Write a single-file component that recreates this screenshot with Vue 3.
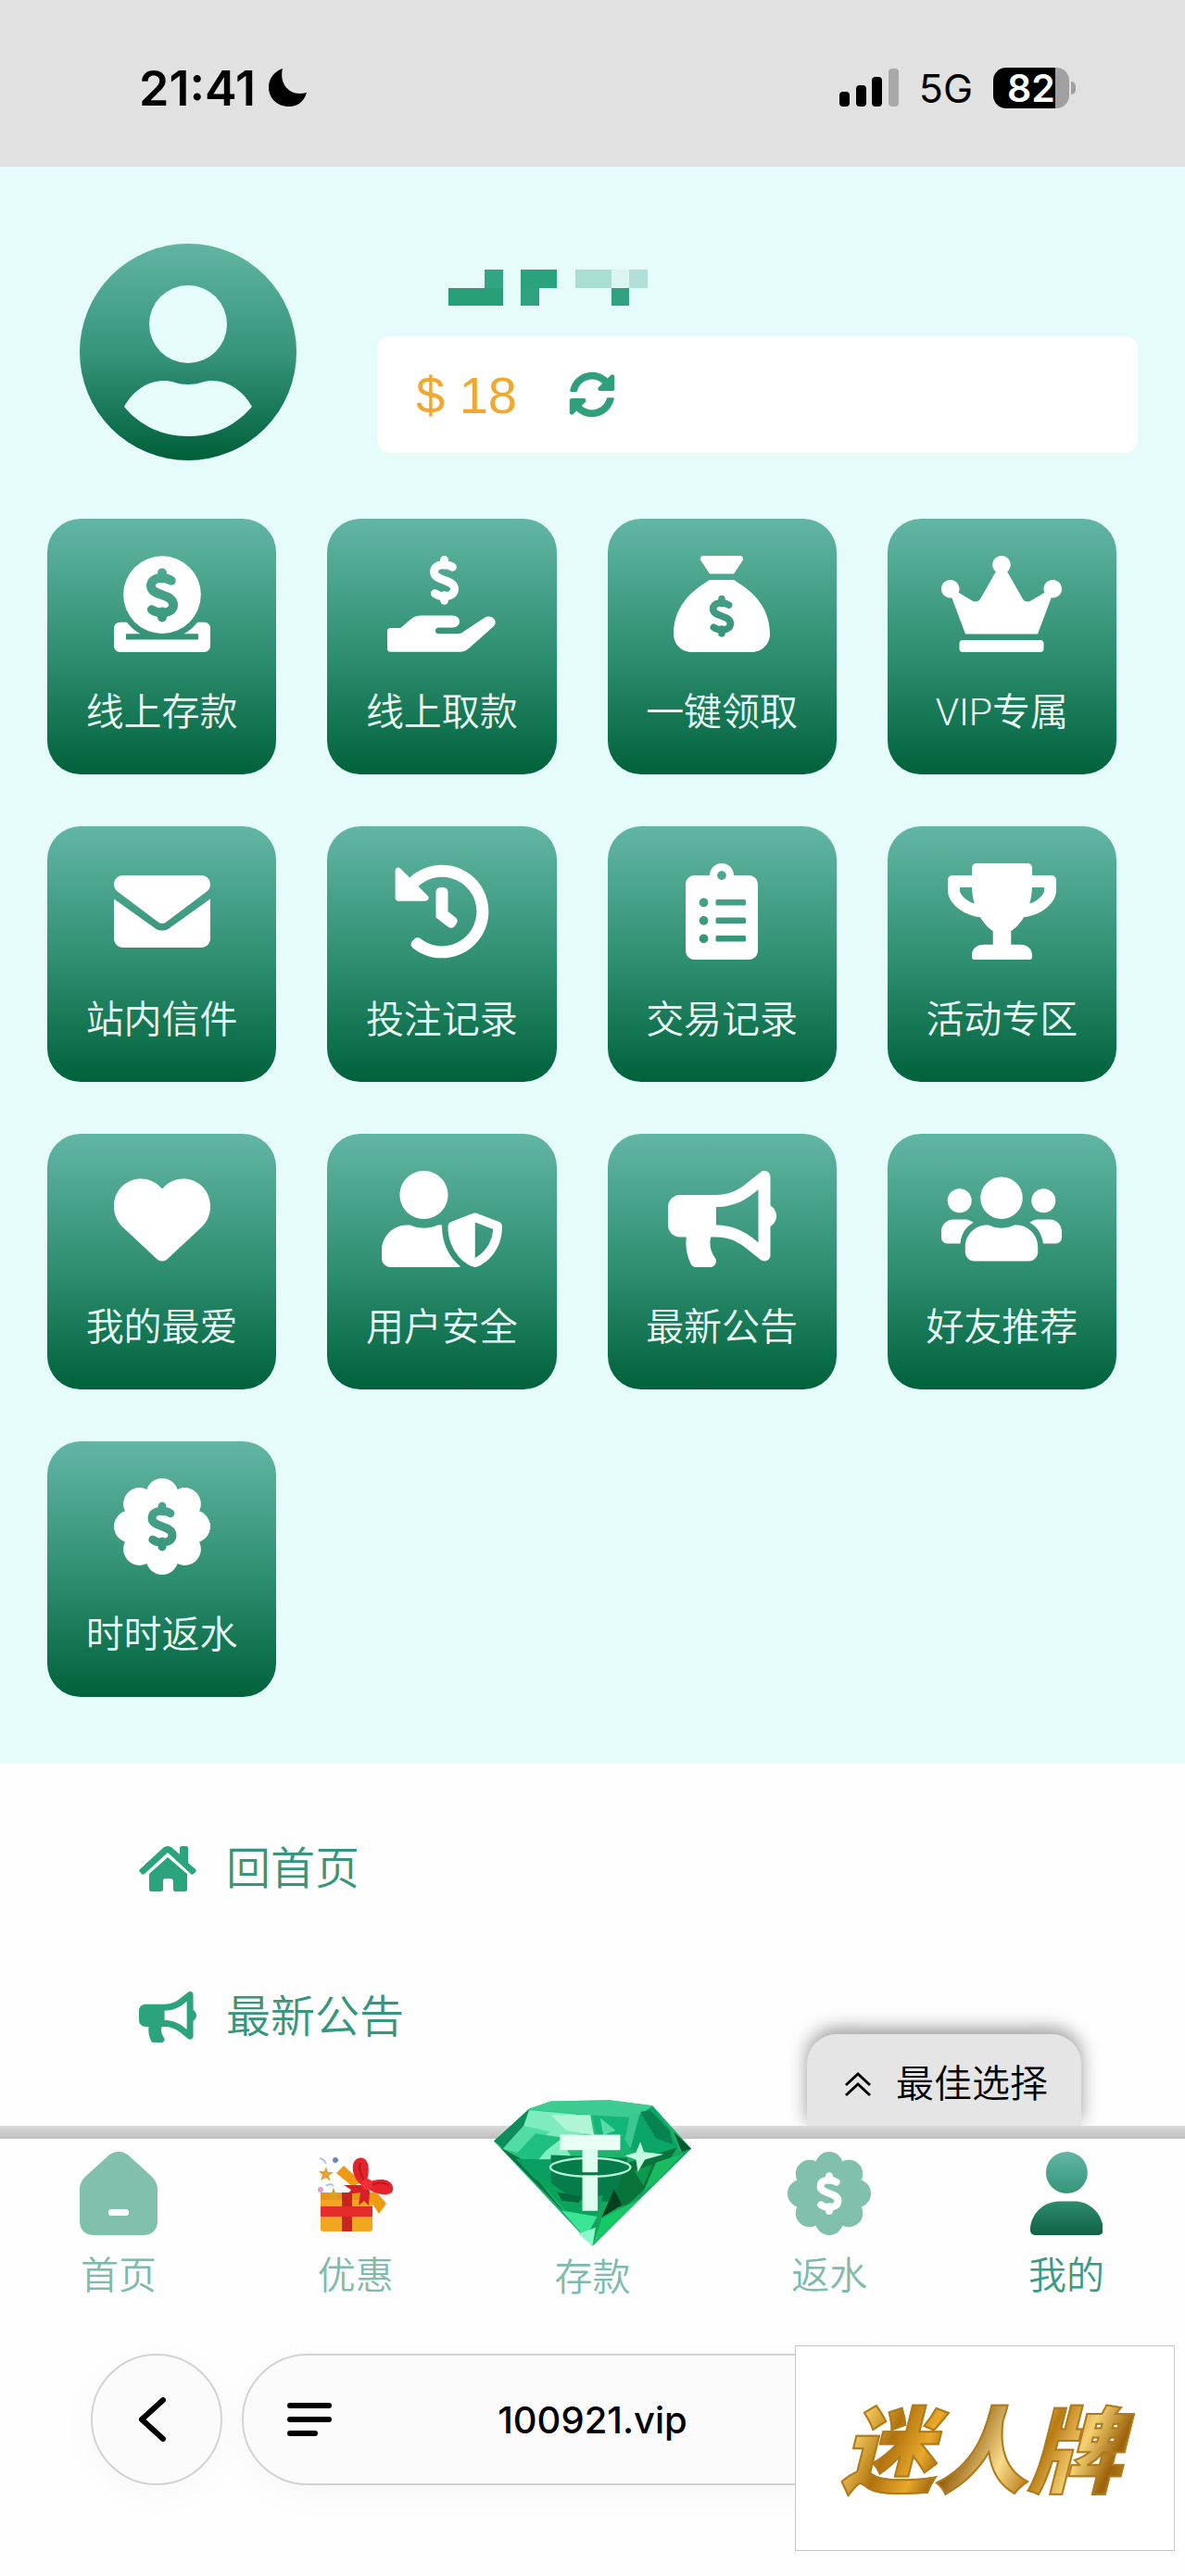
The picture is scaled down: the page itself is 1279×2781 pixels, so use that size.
<template>
    <div class="page">
        <header class="status-bar">
            <div class="status-left">
                <span class="clock">21:41</span>
                <svg class="moon" viewBox="0 0 42 42" aria-hidden="true">
                    <path d="M15 0C11 16 22 31 41 26C38 36 31 41 22 41C9 41 0 32 0 20C0 11 6 3 15 0z" />
                </svg>
            </div>
            <div class="status-right">
                <svg class="signal" viewBox="0 0 64 42" aria-hidden="true">
                    <rect x="0" y="25" width="11" height="16" rx="4" />
                    <rect x="18" y="18" width="11" height="23" rx="4" />
                    <rect x="35" y="9" width="11" height="32" rx="4" />
                    <rect x="53" y="0" width="11" height="41" rx="4" fill="#a9a9a9" />
                </svg>
                <span class="network">5G</span>
                <div class="battery">
                    <span class="battery-body">82</span>
                    <span class="battery-tip"></span>
                </div>
            </div>
        </header>

        <main>
            <section class="member">
                <div class="profile">
                    <svg class="avatar" viewBox="0 0 234 234" aria-hidden="true">
                        <defs>
                            <linearGradient id="avatarFill" x1="0" y1="0" x2="0" y2="1">
                                <stop offset="0" stop-color="#60b5a2" />
                                <stop offset="0.5" stop-color="#36957b" />
                                <stop offset="1" stop-color="#005f39" />
                            </linearGradient>
                        </defs>
                        <circle cx="117" cy="117" r="117" fill="url(#avatarFill)" />
                        <circle cx="117" cy="87" r="42" fill="#e5fcfb" />
                        <path d="M48 176C58 158 74 148 92 148C101 148 104 152 117 152S133 148 142 148C160 148 176 158 186 176C168 197 144 208 117 208S65 197 48 176z" fill="#e5fcfb" />
                    </svg>
                    <div class="account">
                        <svg class="masked-name" viewBox="0 0 11 2" shape-rendering="crispEdges" aria-hidden="true">
                            <rect x="2" y="0" width="1" height="1" fill="#32a682" />
                            <rect x="0" y="1" width="3" height="1" fill="#27a078" />
                            <rect x="4" y="0" width="2" height="1" fill="#2aa37c" />
                            <rect x="4" y="1" width="1" height="1" fill="#2fa37f" />
                            <rect x="7" y="0" width="2" height="1" fill="#a9dfd2" />
                            <rect x="9" y="0" width="1" height="1" fill="#dbf5f0" />
                            <rect x="10" y="0" width="1" height="1" fill="#b2dfd8" />
                            <rect x="9" y="1" width="1" height="1" fill="#2fa37f" />
                        </svg>
                        <div class="balance">
                            <span class="amount">$ 18</span>
                            <button class="refresh" type="button" aria-label="刷新">
                                <svg viewBox="0 0 512 512"><path :d="syncIcon" /></svg>
                            </button>
                        </div>
                    </div>
                </div>

                <nav class="tiles">
                    <a v-for="(tile, i) in tiles" :key="tile.label" class="tile" href="#">
                        <svg class="tile-icon" :viewBox="`0 0 ${tile.width} 512`" aria-hidden="true">
                            <mask v-if="tile.cut" :id="`cut-${i}`">
                                <rect width="100%" height="100%" fill="#fff" />
                                <path class="dollar" :d="dollarIcon" :transform="tile.cut" stroke="#000" />
                            </mask>
                            <g :mask="tile.cut ? `url(#cut-${i})` : null">
                                <path :d="tile.path" fill="#fff" />
                            </g>
                            <path v-if="tile.coin" class="dollar" :d="dollarIcon" :transform="tile.coin" stroke="#fff" />
                        </svg>
                        <span>{{ tile.label }}</span>
                    </a>
                </nav>
            </section>

            <nav class="links">
                <a class="link" href="#">
                    <svg viewBox="0 0 62 54" aria-hidden="true">
                        <path d="M31 2C29 2 27 3 26 4L1 27C0 28 0 29 1 30L3 32C4 33 5 33 6 32L31 9L56 32C57 33 58 33 59 32L61 30C62 29 62 28 61 27L53 20V4C53 3 52 2 51 2H46C45 2 44 3 44 4V11L36 4C35 3 33 2 31 2z" />
                        <path d="M31 14L11 32V49C11 50 12 51 13 51H24C25 51 26 50 26 49V40C26 38 27 37 28 37H34C35 37 37 38 37 40V49C37 50 38 51 39 51H50C51 51 52 50 52 49V32z" />
                    </svg>
                    <span>回首页</span>
                </a>
                <a class="link" href="#">
                    <svg viewBox="0 0 576 512" aria-hidden="true"><path :d="bullhornIcon" /></svg>
                    <span>最新公告</span>
                </a>
            </nav>
        </main>

        <div class="tabbar-wrap">
            <button class="best-choice" type="button">
                <svg viewBox="0 0 30 28" aria-hidden="true"><path d="M2 15L15 3L28 15M2 26L15 14L28 26" /></svg>
                <span>最佳选择</span>
            </button>
            <div class="tabbar-shadow"></div>
            <nav class="tabbar">
                <a class="tab" href="#">
                    <svg class="tab-icon" viewBox="0 0 84 90" aria-hidden="true">
                        <path d="M42 0C37 0 33 2 30 5L7 26C2 31 0 35 0 41V75C0 84 6 90 15 90H69C78 90 84 84 84 75V41C84 35 82 31 77 26L54 5C51 2 47 0 42 0z" fill="#80c0ac" />
                        <rect x="31" y="62" width="22" height="7" rx="3" fill="#fff" />
                    </svg>
                    <span>首页</span>
                </a>
                <a class="tab" href="#">
                    <svg class="tab-icon" viewBox="0 -6 82 90" aria-hidden="true">
                        <path d="M3 38H59V77Q59 80 56 80H6Q3 80 3 77z" fill="#f2a51f" />
                        <path d="M3 38H59V46H3z" fill="#e8941c" />
                        <path d="M26 38H37V80H26z" fill="#c92424" />
                        <path d="M3 53H59V64H3z" fill="#e62b2b" />
                        <path d="M20 17L28 9L47 26L38 32z" fill="#ef9a14" />
                        <path d="M54 43L61 35L74 50L66 61z" fill="#ef9a14" />
                        <path d="M50 32C36 24 34 4 44 1C54-2 58 12 52 28C64 22 79 22 81 32C83 43 66 42 54 34z" fill="#e3242b" />
                        <path d="M50 30L28 30L36 35L32 40L46 38L44 52L50 47L55 52L56 36z" fill="#d81f27" />
                        <path d="M46 6C43 12 47 20 51 27M58 30Q68 25 76 30" fill="none" stroke="#b9161f" stroke-width="2" />
                        <circle cx="53" cy="29" r="6" fill="#f03038" />
                        <path d="M9 10L11 16L17 16L12 20L14 26L9 22L3 25L5 19L1 15L7 15z" fill="#e3a23a" />
                        <path d="M17 33L19 38L24 38L20 42L22 47L17 44L12 47L14 42L10 38L15 38z" fill="#dca11e" />
                        <circle cx="19" cy="3" r="3" fill="#6b86c2" />
                        <circle cx="3" cy="35" r="3" fill="#e79acb" />
                        <path d="M2 1Q7 2 9 7M9 31Q13 27 17 31" fill="none" stroke="#a9c8ef" stroke-width="2" />
                    </svg>
                    <span>优惠</span>
                </a>
                <a class="tab" href="#">
                    <svg class="diamond" viewBox="165 142 640 473" aria-hidden="true">
                        <defs>
                            <linearGradient id="gem" x1="0" y1="0" x2="1" y2="1">
                                <stop offset="0" stop-color="#35d99a" />
                                <stop offset="1" stop-color="#06893f" />
                            </linearGradient>
                        </defs>
                        <path d="M165 275L280 170L350 146L540 142L680 160L805 300L485 615z" fill="url(#gem)" />
                        <path d="M280 170L350 146L540 142L680 160L620 200L480 190L430 185z" fill="#3ccc92" />
                        <path d="M165 275L280 170L262 225L195 300z" fill="#0c8d5b" />
                        <path d="M280 175L430 188L470 250L380 262L240 310L195 300L262 225z" fill="#7fecbd" />
                        <path d="M350 190L478 190L490 255L400 240z" fill="#b0f5d6" />
                        <path d="M262 225L350 245L240 310L195 300z" fill="#4fdda3" />
                        <path d="M300 250L380 262L330 330L230 325z" fill="#1fc07f" />
                        <path d="M335 305L380 270L420 330L310 335z" fill="#7ff0c0" />
                        <path d="M484 192L620 198L600 310L500 252z" fill="#12b678" />
                        <path d="M510 200L560 240L520 255z" fill="#58dba9" />
                        <path d="M620 200L680 163L740 230L770 292L700 330L605 300z" fill="#0ba565" />
                        <path d="M640 180L672 175L735 240L745 285L690 265z" fill="#078351" />
                        <path d="M605 195L640 180L608 300L590 270z" fill="#3cc692" />
                        <path d="M680 163L805 300L770 312L735 235z" fill="#1bb36f" />
                        <path d="M748 245L805 300L775 310z" fill="#05582f" />
                        <path d="M185 295L250 330L400 515L350 462z" fill="#087443" />
                        <path d="M235 332L350 335L350 410L300 400z" fill="#0a9e60" />
                        <path d="M350 320L600 330L570 470L430 470L350 420z" fill="#067c48" />
                        <path d="M300 395L350 410L430 470L520 450L500 520L400 500z" fill="#09a35b" />
                        <path d="M370 440L450 455L440 475L385 468z" fill="#05683a" />
                        <path d="M600 345L760 295L700 390L600 480L530 500L560 440z" fill="#08743a" />
                        <path d="M620 370L680 350L650 420z" fill="#0d9a4f" />
                        <path d="M690 345L780 315L690 410L650 440z" fill="#18bb60" />
                        <path d="M555 430L580 482L515 522z" fill="#03401f" />
                        <path d="M515 525L640 462L485 615z" fill="#14c866" />
                        <path d="M385 500L500 520L470 575L485 615z" fill="#3be596" />
                        <path d="M440 575L495 555L485 615z" fill="#8df8cb" />
                        <path d="M640 278L652 310L716 318L655 335L632 375L626 335L590 322L626 312z" fill="#c3fbe2" />
                        <ellipse cx="478" cy="360" rx="130" ry="30" fill="none" stroke="#b5f7db" stroke-width="7" />
                        <rect x="380" y="254" width="195" height="50" fill="#e9fff6" />
                        <rect x="452" y="300" width="50" height="76" fill="#dcfff0" />
                        <rect x="452" y="386" width="50" height="115" fill="#dcfff0" />
                    </svg>
                    <span>存款</span>
                </a>
                <a class="tab" href="#">
                    <svg class="tab-icon" viewBox="0 0 512 512" aria-hidden="true">
                        <path :d="flowerIcon" fill="#80c0ac" />
                        <path class="dollar" :d="dollarIcon" transform="translate(256 256)" stroke="#fff" />
                    </svg>
                    <span>返水</span>
                </a>
                <a class="tab active" href="#">
                    <svg class="tab-icon" viewBox="0 0 448 512" aria-hidden="true">
                        <defs>
                            <linearGradient id="userFill" gradientUnits="userSpaceOnUse" x1="0" y1="0" x2="0" y2="512">
                                <stop offset="0" stop-color="#62b6a3" />
                                <stop offset="0.5" stop-color="#35957a" />
                                <stop offset="1" stop-color="#0f6244" />
                            </linearGradient>
                        </defs>
                        <path d="M224 256A128 128 0 1 0 224 0a128 128 0 1 0 0 256zm-45.700 48C79.800 304 0 383.800 0 482.300C0 498.700 13.300 512 29.700 512H418.300c16.400 0 29.700-13.300 29.700-29.700C448 383.800 368.200 304 269.700 304H178.300z" fill="url(#userFill)" />
                    </svg>
                    <span>我的</span>
                </a>
            </nav>
        </div>

        <footer class="browser-bar">
            <button class="back" type="button" aria-label="返回">
                <svg viewBox="0 0 30 48"><path d="M27 3L4 24L27 45" /></svg>
            </button>
            <div class="address">
                <button class="menu" type="button" aria-label="菜单">
                    <svg viewBox="0 0 48 36"><path d="M3 3H45M3 18H45M3 33H30" /></svg>
                </button>
                <span>100921.vip</span>
            </div>
            <div class="watermark"><span>迷人牌</span></div>
        </footer>
    </div>
</template>

<script setup>
    const syncIcon = 'M370.720 133.280C339.458 104.008 298.888 87.962 255.848 88c-77.458.068-144.328 53.178-162.791 126.850-1.344 5.363-6.122 9.150-11.651 9.150H24.103c-7.498 0-13.194-6.807-11.807-14.176C33.933 94.924 134.813 8 256 8c66.448 0 126.791 26.136 171.315 68.685L463.030 40.970C478.149 25.851 504 36.559 504 57.941V192c0 13.255-10.745 24-24 24H345.941c-21.382 0-32.090-25.851-16.971-40.971l41.750-41.749zM32 296h134.059c21.382 0 32.090 25.851 16.971 40.971l-41.750 41.750c31.262 29.273 71.835 45.319 114.876 45.280 77.418-.070 144.315-53.144 162.787-126.849 1.344-5.363 6.122-9.150 11.651-9.150h57.304c7.498 0 13.194 6.807 11.807 14.176C478.067 417.076 377.187 504 256 504c-66.448 0-126.791-26.136-171.315-68.685L48.970 471.030C33.851 486.149 8 475.441 8 454.059V320c0-13.255 10.745-24 24-24z';

    const bullhornIcon = 'M576 240c0-23.630-12.950-44.040-32-55.120V32.010C544 23.260 537.020 0 512 0c-7.120 0-14.190 2.380-19.980 7.020l-85.030 68.030C364.280 109.190 310.660 128 256 128H64c-35.350 0-64 28.650-64 64v96c0 35.350 28.650 64 64 64h33.700c-1.390 10.480-2.180 21.140-2.180 32 0 39.770 9.260 77.350 25.560 110.940 5.190 10.690 16.520 17.060 28.400 17.060h74.280c26.050 0 41.690-29.840 25.900-50.560-16.400-21.520-26.150-48.360-26.150-77.440 0-11.110 1.620-21.790 4.410-32H256c54.660 0 108.280 18.810 150.980 52.950l85.030 68.030a32.023 32.023 0 0 0 19.980 7.020c24.920 0 32-22.780 32-32V295.130C563.050 284.040 576 263.630 576 240zm-96 141.420l-33.050-26.440C392.950 311.780 325.120 288 256 288v-96c69.120 0 136.950-23.780 190.950-66.980L480 98.580v282.840z';

    // Centred on 0,0 so it can be placed with a transform
    const dollarIcon = 'M44-70C16-88-54-92-54-44C-54 6 54-8 54 46C54 94-20 92-50 70M0-108V-80M0 80V108';

    // Eight petals around a disc
    const circle = (x, y, r) => `M${x - r} ${y}a${r} ${r} 0 1 0 ${2 * r} 0a${r} ${r} 0 1 0 ${-2 * r} 0z`;
    const petals = [...Array(8).keys()].map((n) => {
        const angle = (n * Math.PI) / 4;
        return circle(256 + 170 * Math.cos(angle), 256 + 170 * Math.sin(angle), 86);
    });
    const flowerIcon = circle(256, 256, 200) + petals.join('');

    const tiles = [
        {
            label: '线上存款',
            width: 512,
            cut: 'translate(256 209) scale(1.1)',
            path: 'M50 207a206 206 0 1 0 412 0a206 206 0 1 0-412 0zM32 353H68A238 238 0 0 0 141 415H64V446H448V415H371A238 238 0 0 0 444 353H480a32 32 0 0 1 32 32V480a32 32 0 0 1-32 32H32a32 32 0 0 1-32-32V385a32 32 0 0 1 32-32z',
        },
        {
            label: '线上取款',
            width: 576,
            coin: 'translate(303 130)',
            path: 'M16 384H70L124 338C144 322 168 318 180 318H348C368 318 384 332 384 350S368 382 348 382H274C250 382 250 415 274 415H372C388 415 396 411 404 404L516 330C546 306 594 342 566 374L436 490C420 506 404 511 380 511H16C7 511 0 504 0 495V400C0 391 7 384 16 384z',
        },
        {
            label: '一键领取',
            width: 512,
            cut: 'translate(256 321) scale(0.85)',
            path: 'M320 96H192L144.600 24.900C137.500 14.200 145.100 0 157.900 0H354.100c12.800 0 20.400 14.200 13.300 24.900L320 96zM192 128H320c3.800 2.500 8.100 5.300 13 8.400C389.700 172.700 512 250.900 512 416c0 53-43 96-96 96H96c-53 0-96-43-96-96C0 250.900 122.300 172.700 179 136.400c4.800-3.100 9.200-5.900 13-8.400z',
        },
        {
            label: 'VIP专属',
            width: 640,
            path: 'M528 448H112c-8.800 0-16 7.200-16 16v32c0 8.800 7.200 16 16 16h416c8.800 0 16-7.200 16-16v-32c0-8.800-7.200-16-16-16zm64-320c-26.500 0-48 21.500-48 48 0 7.100 1.600 13.700 4.400 19.800L476 239.200c-15.400 9.200-35.300 4-44.200-11.600L350.300 85C361 76.200 368 63 368 48c0-26.500-21.500-48-48-48s-48 21.500-48 48c0 15 7 28.200 17.700 37l-81.500 142.600c-8.900 15.600-28.900 20.800-44.200 11.600l-72.300-43.400c2.700-6 4.400-12.700 4.400-19.800 0-26.500-21.500-48-48-48S0 149.500 0 176s21.500 48 48 48c2.600 0 5.200-.4 7.700-.8L128 416h384l72.300-192.800c2.500.4 5.100.8 7.700.8 26.500 0 48-21.500 48-48s-21.500-48-48-48z',
        },
        {
            label: '站内信件',
            width: 512,
            path: 'M48 64C21.500 64 0 85.500 0 112c0 15.100 7.100 29.300 19.200 38.400L236.800 313.600c11.400 8.500 27 8.500 38.400 0L492.800 150.400c12.100-9.100 19.200-23.300 19.200-38.400 0-26.500-21.500-48-48-48H48zM0 190V400c0 26.500 21.500 48 48 48H464c26.500 0 48-21.500 48-48V190L294.400 344c-22.800 17.100-54 17.100-76.800 0L0 190z',
        },
        {
            label: '投注记录',
            width: 512,
            path: 'M504 255.531c.253 136.640-111.180 248.372-247.820 248.468-59.015.042-113.223-20.530-155.822-54.911-11.077-8.940-11.905-25.541-1.839-35.607l11.267-11.267c8.609-8.609 22.353-9.551 31.891-1.984C173.062 425.135 212.781 440 256 440c101.705 0 184-82.311 184-184 0-101.705-82.311-184-184-184-48.814 0-93.149 18.969-126.068 49.932l50.754 50.754c10.080 10.080 2.941 27.314-11.313 27.314H24c-8.837 0-16-7.163-16-16V38.627c0-14.254 17.234-21.393 27.314-11.314l49.372 49.372C129.209 34.136 189.552 8 256 8c136.810 0 247.747 110.780 248 247.531zm-180.912 78.784l9.823-12.630c8.138-10.463 6.253-25.542-4.210-33.679L288 256.349V152c0-13.255-10.745-24-24-24h-16c-13.255 0-24 10.745-24 24v135.651l65.409 50.874c10.463 8.137 25.541 6.253 33.679-4.210z',
        },
        {
            label: '交易记录',
            width: 384,
            path: 'M336 64h-80c0-35.300-28.700-64-64-64s-64 28.700-64 64H48C21.500 64 0 85.500 0 112v352c0 26.500 21.500 48 48 48h288c26.500 0 48-21.500 48-48V112c0-26.500-21.500-48-48-48zM96 424c-13.300 0-24-10.700-24-24s10.700-24 24-24 24 10.700 24 24-10.700 24-24 24zm0-96c-13.300 0-24-10.700-24-24s10.700-24 24-24 24 10.700 24 24-10.700 24-24 24zm0-96c-13.300 0-24-10.700-24-24s10.700-24 24-24 24 10.700 24 24-10.700 24-24 24zm96-192c13.300 0 24 10.700 24 24s-10.700 24-24 24-24-10.700-24-24 10.700-24 24-24zm128 368c0 4.400-3.600 8-8 8H168c-4.400 0-8-3.600-8-8v-16c0-4.400 3.600-8 8-8h144c4.400 0 8 3.600 8 8v16zm0-96c0 4.400-3.600 8-8 8H168c-4.400 0-8-3.600-8-8v-16c0-4.400 3.600-8 8-8h144c4.400 0 8 3.600 8 8v16zm0-96c0 4.400-3.600 8-8 8H168c-4.400 0-8-3.600-8-8v-16c0-4.400 3.600-8 8-8h144c4.400 0 8 3.600 8 8v16z',
        },
        {
            label: '活动专区',
            width: 576,
            path: 'M552 64H448V24c0-13.300-10.700-24-24-24H152c-13.300 0-24 10.700-24 24v40H24C10.700 64 0 74.700 0 88v56c0 35.700 22.500 72.400 61.900 100.700 31.500 22.700 69.800 37.100 110 41.700C203.300 338.500 240 360 240 360v72h-48c-35.300 0-64 20.700-64 56v12c0 6.600 5.400 12 12 12h296c6.600 0 12-5.400 12-12v-12c0-35.300-28.700-56-64-56h-48v-72s36.700-21.500 68.100-73.600c40.300-4.600 78.600-19 110-41.700 39.300-28.300 61.900-65 61.900-100.700V88c0-13.300-10.700-24-24-24zM99.300 192.800C74.900 175.200 64 155.600 64 144v-16h64.200c1 32.600 5.800 61.200 12.800 86.200-15.100-5.200-29.200-12.400-41.700-21.400zM512 144c0 16.100-17.700 36.100-35.300 48.800-12.500 9-26.700 16.200-41.800 21.400 7-25 11.800-53.600 12.800-86.200H512v16z',
        },
        {
            label: '我的最爱',
            width: 512,
            path: 'M47.600 300.400L228.300 469.100c7.500 7 17.400 10.900 27.700 10.900s20.200-3.900 27.700-10.900L464.400 300.400c30.400-28.300 47.600-68 47.600-109.500v-5.800c0-69.900-50.500-129.500-119.400-141C347 36.500 300.600 51.400 268 84L256 96 244 84c-32.600-32.600-79-47.500-124.600-39.900C50.500 55.600 0 115.200 0 185.100v5.800c0 41.500 17.200 81.200 47.600 109.500z',
        },
        {
            label: '用户安全',
            width: 640,
            path: 'M622.300 271.100l-115.200-45c-4.100-1.600-12.600-3.700-22.200 0l-115.200 45c-10.700 4.200-17.700 14-17.700 24.900 0 111.600 68.700 188.800 132.900 213.900 9.600 3.700 18 1.600 22.200 0C558.400 489.900 640 420.500 640 296c0-10.900-7-20.700-17.700-24.900zM496 462.400V273.300l95.500 37.300c-5.600 87.100-60.900 135.400-95.500 151.800zM224 256c70.700 0 128-57.300 128-128S294.700 0 224 0 96 57.300 96 128s57.300 128 128 128zm96 40c0-2.500.8-4.800 1.100-7.200-2.500-.1-4.900-.8-7.500-.8h-16.700c-22.200 10.200-46.900 16-72.900 16s-50.600-5.800-72.900-16h-16.700C60.200 288 0 348.200 0 422.400V464c0 26.500 21.500 48 48 48h352c6.800 0 13.300-1.500 19.200-4-54-42.900-99.200-116.700-99.200-212z',
        },
        { label: '最新公告', width: 576, path: bullhornIcon },
        {
            label: '好友推荐',
            width: 640,
            path: circle(320, 144, 112) + circle(97, 159, 64) + circle(543, 159, 64)
                + 'M64 258H128C144 258 158 264 171 275C130 298 105 336 101 386H32C14 386 0 372 0 354V322C0 287 29 258 64 258z'
                + 'M576 258H512C496 258 482 264 469 275C510 298 535 336 541 386H608C626 386 640 372 640 354V322C640 287 611 258 576 258z'
                + 'M243 288H251C272 298 296 304 320 304S368 298 389 288H397C461 288 513 340 513 404V432C513 458 492 480 465 480H175C149 480 127 458 127 432V404C127 340 179 288 243 288z',
        },
        { label: '时时返水', width: 512, cut: 'translate(256 256)', path: flowerIcon },
    ];
</script>

<style>
    body {
        background: #fefefe;
    }
</style>

<style scoped>
    .page {
        font-family: "Liberation Sans", "Noto Sans CJK SC", sans-serif;
        font-weight: 350;
        color: #000;
        overflow: hidden;
    }

    a {
        text-decoration: none;
    }

    button {
        border: none;
        padding: 0;
        background: none;
        font: inherit;
        color: inherit;
        cursor: pointer;
    }

    svg {
        display: block;
    }

    .dollar {
        fill: none;
        stroke-width: 44;
        stroke-linecap: round;
        stroke-linejoin: round;
    }

    /* Status bar */
    .status-bar {
        display: flex;
        justify-content: space-between;
        align-items: center;
        height: 180px;
        box-sizing: border-box;
        padding: 10px 118px 0 150px;
        background: #e1e1e1;
        font-family: Inter, sans-serif;
    }

    .status-left,
    .status-right,
    .battery {
        display: flex;
        align-items: center;
    }

    .status-left {
        gap: 14px;
    }

    .clock {
        font-size: 52px;
        font-weight: 600;
    }

    .moon {
        width: 42px;
    }

    .status-right {
        gap: 22px;
    }

    .signal {
        width: 64px;
    }

    .network {
        font-size: 43px;
        font-weight: 400;
    }

    .battery {
        gap: 2px;
    }

    .battery-body {
        width: 82px;
        height: 44px;
        border-radius: 14px;
        background: linear-gradient(90deg, #000 82%, #a0a0a0 82%);
        color: #fff;
        font-size: 41px;
        font-weight: 600;
        line-height: 44px;
        text-align: center;
    }

    .battery-tip {
        width: 5px;
        height: 14px;
        border-radius: 0 5px 5px 0;
        background: #a0a0a0;
    }

    /* Member area */
    .member {
        background: #e5fcfb;
        padding: 83px 0 72px;
    }

    .profile {
        display: flex;
        gap: 87px;
        padding: 0 51px 0 86px;
    }

    .avatar {
        width: 234px;
        height: 234px;
        flex-shrink: 0;
    }

    .account {
        flex: 1;
        padding-top: 28px;
    }

    .masked-name {
        height: 39px;
        margin-left: 77px;
    }

    .balance {
        display: flex;
        align-items: center;
        gap: 56px;
        height: 126px;
        margin-top: 33px;
        padding-left: 42px;
        border-radius: 14px;
        background: #fff;
    }

    .amount {
        color: #f0a92e;
        font-size: 56px;
    }

    .refresh svg {
        width: 50px;
        fill: #2f9f7d;
    }

    .tiles {
        display: grid;
        grid-template-columns: repeat(4, 1fr);
        gap: 56px 55px;
        margin-top: 63px;
        padding: 0 74px 0 51px;
    }

    .tile {
        display: flex;
        flex-direction: column;
        align-items: center;
        gap: 41px;
        padding: 40px 0 43px;
        border-radius: 36px;
        background: linear-gradient(180deg, #62b6a4 0%, #2f8f72 52%, #00623b 100%);
        color: #ecfff6;
        font-family: Roboto, "Noto Sans CJK SC", sans-serif;
        font-size: 41px;
        line-height: 48px;
    }

    .tile-icon {
        height: 104px;
    }

    /* Plain links */
    .links {
        display: flex;
        flex-direction: column;
        gap: 64px;
        padding: 66px 150px 69px;
    }

    .link {
        display: flex;
        align-items: center;
        gap: 32px;
        height: 96px;
        color: #35967b;
        font-size: 48px;
        line-height: 56px;
    }

    .link svg {
        width: 62px;
        fill: #2ba37c;
    }

    /* Bottom tab bar */
    .tabbar-wrap {
        position: relative;
    }

    .tabbar-shadow {
        position: relative;
        height: 14px;
        background: linear-gradient(180deg, #dadada, #bfbfbf);
    }

    .best-choice {
        position: absolute;
        right: 112px;
        bottom: 100%;
        display: flex;
        align-items: center;
        gap: 26px;
        height: 100px;
        margin-bottom: -1px;
        padding: 8px 36px 0 40px;
        border-radius: 32px 32px 0 0;
        background: #e5e5e5;
        box-shadow: 0 -6px 20px rgba(0, 0, 0, 0.4);
        clip-path: inset(-40px -40px 0 -40px);
        font-size: 41px;
        line-height: 48px;
    }

    .best-choice svg {
        width: 30px;
        fill: none;
        stroke: #000;
        stroke-width: 3;
    }

    .tabbar {
        position: relative;
        display: grid;
        grid-template-columns: repeat(5, 1fr);
        padding: 14px 0 58px;
        background: #fefefe;
    }

    .tab {
        display: flex;
        flex-direction: column;
        align-items: center;
        gap: 20px;
        color: #80bba9;
        font-size: 41px;
        line-height: 48px;
    }

    .tab.active {
        color: #3b9a80;
    }

    .tab-icon {
        height: 90px;
    }

    .diamond {
        width: 213px;
        height: 158px;
        margin-top: -56px;
        margin-bottom: -10px;
    }

    /* Browser bar */
    .browser-bar {
        position: relative;
        display: flex;
        gap: 21px;
        padding: 0 261px 98px 98px;
        font-family: Inter, sans-serif;
    }

    .back,
    .address {
        height: 142px;
        box-sizing: border-box;
        border: 2px solid #d3d3d3;
        border-radius: 71px;
        background: #fbfbfb;
        box-shadow: 0 10px 40px rgba(0, 0, 0, 0.03);
    }

    .back {
        display: flex;
        align-items: center;
        justify-content: center;
        width: 142px;
        flex-shrink: 0;
    }

    .back svg {
        width: 30px;
        margin-right: 10px;
    }

    .back path,
    .menu path {
        fill: none;
        stroke: #000;
        stroke-width: 6;
        stroke-linecap: round;
        stroke-linejoin: round;
    }

    .address {
        flex: 1;
        display: grid;
        grid-template-columns: 48px 1fr 48px;
        align-items: center;
        padding: 0 47px;
        font-size: 40px;
        font-weight: 500;
        text-align: center;
    }

    .menu svg {
        width: 48px;
    }

    .watermark {
        position: absolute;
        right: 11px;
        bottom: 27px;
        display: flex;
        align-items: center;
        justify-content: center;
        width: 408px;
        height: 220px;
        border: 1px solid #c8c8c8;
        background: #fff;
    }

    .watermark span {
        padding: 0 20px 8px 12px;
        background: linear-gradient(115deg, #a9700f 0%, #f3c95c 14%, #b0720c 24%, #e9a92b 34%, #8f5a08 42%, #f8dc8c 56%, #b97a12 66%, #f5d173 76%, #9c620a 86%, #e6b040 100%);
        background-clip: text;
        color: transparent;
        -webkit-text-stroke: 2px #b07a1c;
        font-family: "Noto Sans CJK SC", sans-serif;
        font-size: 101px;
        font-weight: 900;
        font-style: italic;
        line-height: 140px;
    }
</style>
